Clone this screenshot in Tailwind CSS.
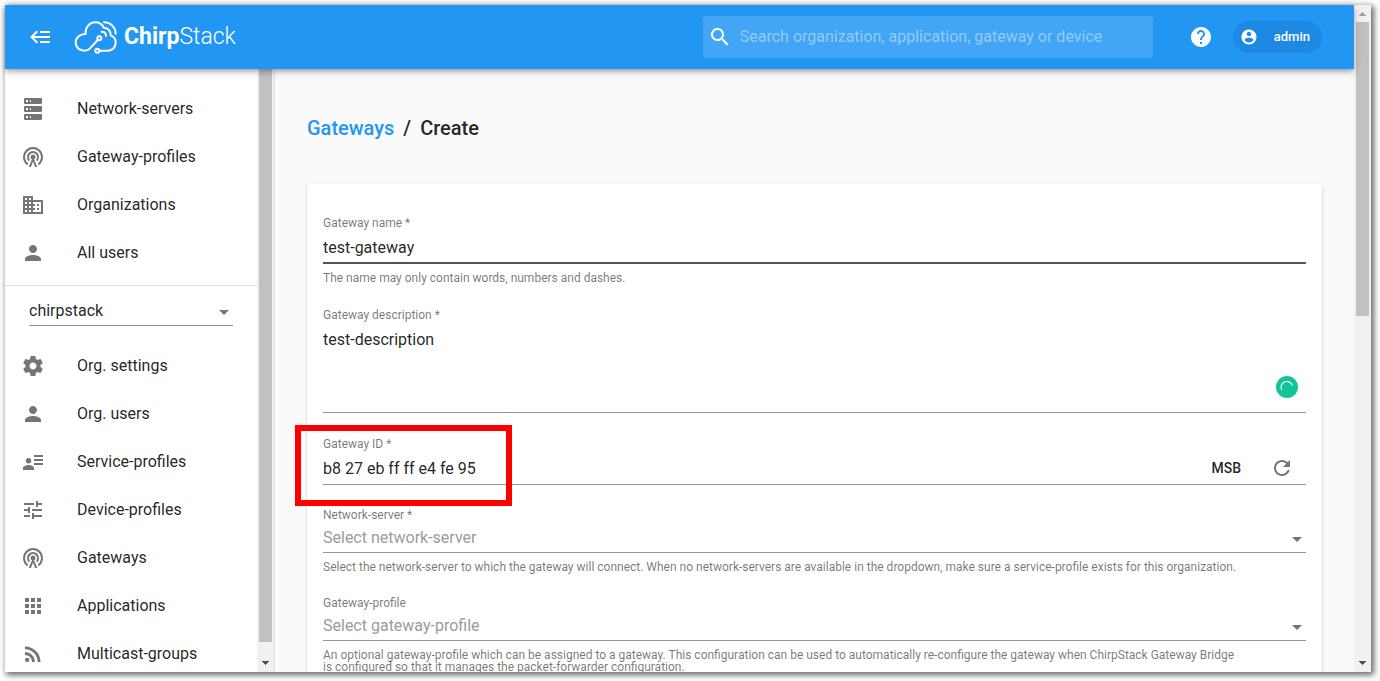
<!DOCTYPE html>
<html lang="en">
<head>
<meta charset="utf-8">
<meta name="viewport" content="width=device-width, initial-scale=1">
<title>ChirpStack - Create gateway</title>
<script src="https://cdn.jsdelivr.net/npm/@tailwindcss/browser@4"></script>
</head>
<body class="h-screen overflow-hidden bg-white pt-[5px] pl-[5px] pr-[9px] pb-[9px] font-['Roboto',sans-serif] text-base text-black/87">
<div class="flex h-full bg-[#fafafa] shadow-[2px_2px_6px_1px_rgba(0,0,0,0.6)]">
  <div class="flex min-w-0 flex-1 flex-col">
    <header class="relative z-10 flex h-16 shrink-0 items-center bg-[#2196f3] pl-6 pr-8 text-white shadow-[0_2px_4px_-1px_rgba(0,0,0,0.2),0_4px_5px_rgba(0,0,0,0.14),0_1px_10px_rgba(0,0,0,0.12)]">
      <button type="button" aria-label="Toggle menu" class="size-6 shrink-0">
        <svg viewBox="0 0 24 24" class="size-6 fill-current"><path d="M5,13L9,17L7.6,18.42L1.18,12L7.6,5.58L9,7L5,11H21V13H5M21,6V8H11V6H21M21,16V18H11V16H21Z"/></svg>
      </button>
      <a href="#" class="ml-5 flex items-center gap-[6px] text-[23px] leading-8">
        <svg viewBox="220 50 135 105" class="h-[35px] w-[45px]" fill="none" stroke="currentColor" stroke-width="6" stroke-linecap="round" stroke-linejoin="round" aria-hidden="true">
          <path d="M294 110 L271 135 Q265 142 254 142 C238 142 228 131 228 118 C228 103 240 92 258 92 C256 71 270 57 286 57 C298 57 308 63 312 73 C325 74 333 83 333 96 C343 99 348 107 348 118 C348 131 339 142 325 142 L300 142"/>
          <circle cx="299" cy="105" r="6"/>
          <circle cx="293" cy="142" r="6"/>
          <path d="M313 57 C333 57 348 72 348 91"/>
          <path d="M306 85 C314 85 319 90 319 98"/>
        </svg>
        <span><span class="font-bold">Chirp</span><span class="font-light">Stack</span></span>
      </a>
      <label class="ml-auto flex h-[42px] w-[450px] items-center gap-2 rounded-[3px] bg-[#42a5f5] pl-[5px] pr-2">
        <svg viewBox="0 0 24 24" class="size-6 shrink-0 fill-current" aria-hidden="true"><path d="M15.5 14h-.79l-.28-.27C15.41 12.59 16 11.11 16 9.5 16 5.91 13.09 3 9.5 3S3 5.91 3 9.5 5.91 16 9.5 16c1.61 0 3.09-.59 4.23-1.57l.27.28v.79l5 4.99L20.49 19l-4.99-5zm-6 0C7.01 14 5 11.99 5 9.5S7.01 5 9.5 5 14 7.01 14 9.5 11.99 14 9.5 14z"/></svg>
        <input type="search" aria-label="Search" placeholder="Search organization, application, gateway or device" class="min-w-0 flex-1 bg-transparent text-base outline-none placeholder:text-[#93cbf9]">
      </label>
      <a href="#" aria-label="Help" class="ml-9">
        <svg viewBox="0 0 24 24" class="size-6 fill-current"><path d="M12 2C6.48 2 2 6.48 2 12s4.48 10 10 10 10-4.48 10-10S17.52 2 12 2zm1 17h-2v-2h2v2zm2.07-7.75l-.9.92C13.45 12.9 13 13.5 13 15h-2v-.5c0-1.1.45-2.1 1.17-2.83l1.24-1.26c.37-.36.59-.86.59-1.41 0-1.1-.9-2-2-2s-2 .9-2 2H8c0-2.21 1.79-4 4-4s4 1.79 4 4c0 .88-.36 1.68-.93 2.25z"/></svg>
      </a>
      <button type="button" class="ml-5 flex h-8 items-center gap-4 rounded-full bg-[#1e88e5] pl-[7px] pr-3 text-[13px] font-medium">
        <svg viewBox="0 0 24 24" class="size-[18px] fill-current" aria-hidden="true"><path d="M12 2C6.48 2 2 6.48 2 12s4.48 10 10 10 10-4.48 10-10S17.52 2 12 2zm0 3c1.66 0 3 1.34 3 3s-1.34 3-3 3-3-1.340-3-3 1.34-3 3-3zm0 14.200c-2.500 0-4.710-1.280-6-3.220.03-1.990 4-3.080 6-3.080 1.990 0 5.970 1.090 6 3.080-1.290 1.940-3.500 3.220-6 3.220z"/></svg>
        admin
      </button>
    </header>

    <div class="flex min-h-0 flex-1">
      <aside class="flex w-[270px] shrink-0 overflow-hidden border-r border-black/12 bg-white">
        <nav class="min-w-0 flex-1 pt-4" aria-label="Main">
          <ul class="border-b border-black/12 pb-2">
            <li><a href="#" class="flex h-12 items-center gap-8 pl-4"><svg viewBox="0 0 24 24" class="size-6 fill-[#757575]"><path d="M4,1H20A1,1 0 0,1 21,2V6A1,1 0 0,1 20,7H4A1,1 0 0,1 3,6V2A1,1 0 0,1 4,1M4,9H20A1,1 0 0,1 21,10V14A1,1 0 0,1 20,15H4A1,1 0 0,1 3,14V10A1,1 0 0,1 4,9M4,17H20A1,1 0 0,1 21,18V22A1,1 0 0,1 20,23H4A1,1 0 0,1 3,22V18A1,1 0 0,1 4,17M9,5H10V3H9V5M9,13H10V11H9V13M9,21H10V19H9V21M5,3V5H7V3H5M5,11V13H7V11H5M5,19V21H7V19H5Z"/></svg>Network-servers</a></li>
            <li><a href="#" class="flex h-12 items-center gap-8 pl-4"><svg viewBox="0 0 24 24" class="size-6 fill-[#757575]"><path d="M11 14.300A2.500 2.500 0 1 1 13 14.300L16.300 22H14.100L12 16.500L9.900 22H7.700Z"/><path d="M6.300 20.200A10 10 0 1 1 17.700 20.200L16.900 18.400A8 8 0 1 0 7.100 18.400ZM8 16.500A6 6 0 1 1 16 16.500L15.200 14.500A4 4 0 1 0 8.800 14.500Z"/></svg>Gateway-profiles</a></li>
            <li><a href="#" class="flex h-12 items-center gap-8 pl-4"><svg viewBox="0 0 24 24" class="size-6 fill-[#757575]"><path d="M12 7V3H2v18h20V7H12zM6 19H4v-2h2v2zm0-4H4v-2h2v2zm0-4H4V9h2v2zm0-4H4V5h2v2zm4 12H8v-2h2v2zm0-4H8v-2h2v2zm0-4H8V9h2v2zm0-4H8V5h2v2zm10 12h-8v-2h2v-2h-2v-2h2v-2h-2V9h8v10zm-2-8h-2v2h2v-2zm0 4h-2v2h2v-2z"/></svg>Organizations</a></li>
            <li><a href="#" class="flex h-12 items-center gap-8 pl-4"><svg viewBox="0 0 24 24" class="size-6 fill-[#757575]"><path d="M12 12c2.210 0 4-1.790 4-4s-1.790-4-4-4-4 1.790-4 4 1.790 4 4 4zm0 2c-2.670 0-8 1.340-8 4v2h16v-2c0-2.660-5.330-4-8-4z"/></svg>All users</a></li>
          </ul>
          <div class="relative mx-6 mt-2 mb-4">
            <select aria-label="Organization" class="block h-8 w-full appearance-none border-b border-black/42 bg-transparent pt-0.5 pr-6 text-base outline-none"><option>chirpstack</option></select>
            <svg viewBox="0 0 24 24" class="pointer-events-none absolute right-[-3px] top-[6px] size-6 fill-[#757575]" aria-hidden="true"><path d="M7 10l5 5 5-5z"/></svg>
          </div>
          <ul>
            <li><a href="#" class="flex h-12 items-center gap-8 pl-4"><svg viewBox="0 0 24 24" class="size-6 fill-[#757575]"><path d="M19.430 12.980c.04-.32.070-.64.070-.98s-.03-.66-.07-.98l2.110-1.650c.19-.15.24-.42.12-.64l-2-3.460c-.12-.22-.39-.3-.61-.22l-2.490 1c-.52-.4-1.080-.73-1.690-.98l-.38-2.650C14.460 2.180 14.250 2 14 2h-4c-.25 0-.46.18-.49.42l-.38 2.650c-.61.25-1.170.59-1.690.98l-2.490-1c-.23-.09-.49 0-.61.22l-2 3.460c-.13.22-.07.49.12.64l2.110 1.650c-.04.32-.07.65-.07.98s.03.66.07.98l-2.110 1.650c-.19.15-.24.42-.12.64l2 3.460c.12.22.39.3.61.22l2.490-1c.52.4 1.080.73 1.690.98l.38 2.650c.03.24.24.42.49.42h4c.25 0 .46-.18.49-.42l.38-2.650c.61-.25 1.170-.59 1.690-.98l2.490 1c.23.09.49 0 .61-.22l2-3.460c.12-.22.070-.49-.12-.64l-2.110-1.650zM12 15.500c-1.930 0-3.500-1.570-3.500-3.500s1.570-3.500 3.500-3.500 3.500 1.570 3.500 3.500-1.570 3.500-3.500 3.500z"/></svg>Org. settings</a></li>
            <li><a href="#" class="flex h-12 items-center gap-8 pl-4"><svg viewBox="0 0 24 24" class="size-6 fill-[#757575]"><path d="M12 12c2.210 0 4-1.790 4-4s-1.790-4-4-4-4 1.790-4 4 1.790 4 4 4zm0 2c-2.670 0-8 1.340-8 4v2h16v-2c0-2.660-5.330-4-8-4z"/></svg>Org. users</a></li>
            <li><a href="#" class="flex h-12 items-center gap-8 pl-4"><svg viewBox="0 0 24 24" class="size-6 fill-[#757575]"><path d="M13 5h9v2h-9zM13 9h9v2h-9zM13 13h9v2h-9zM7.500 8a2.700 2.700 0 1 1 0 5.400a2.700 2.700 0 1 1 0-5.400zM2 18c0-2 3.670-3 5.500-3s5.500 1 5.500 3v2H2z"/></svg>Service-profiles</a></li>
            <li><a href="#" class="flex h-12 items-center gap-8 pl-4"><svg viewBox="0 0 24 24" class="size-6 fill-[#757575]"><path d="M3 17v2h6v-2H3zM3 5v2h10V5H3zm10 16v-2h8v-2h-8v-2h-2v6h2zM7 9v2H3v2h4v2h2V9H7zm14 4v-2H11v2h10zm-6-4h2V7h4V5h-4V3h-2v6z"/></svg>Device-profiles</a></li>
            <li><a href="#" class="flex h-12 items-center gap-8 pl-4"><svg viewBox="0 0 24 24" class="size-6 fill-[#757575]"><path d="M11 14.300A2.500 2.500 0 1 1 13 14.300L16.300 22H14.100L12 16.500L9.900 22H7.700Z"/><path d="M6.300 20.200A10 10 0 1 1 17.700 20.200L16.900 18.400A8 8 0 1 0 7.100 18.400ZM8 16.500A6 6 0 1 1 16 16.500L15.200 14.500A4 4 0 1 0 8.800 14.500Z"/></svg>Gateways</a></li>
            <li><a href="#" class="flex h-12 items-center gap-8 pl-4"><svg viewBox="0 0 24 24" class="size-6 fill-[#757575]"><path d="M4 8h4V4H4v4zm6 12h4v-4h-4v4zm-6 0h4v-4H4v4zm0-6h4v-4H4v4zm6 0h4v-4h-4v4zm6-10v4h4V4h-4zm-6 4h4V4h-4v4zm6 6h4v-4h-4v4zm0 6h4v-4h-4v4z"/></svg>Applications</a></li>
            <li><a href="#" class="flex h-12 items-center gap-8 pl-4"><svg viewBox="0 0 24 24" class="size-6 fill-[#757575]"><circle cx="6.180" cy="17.820" r="2.180"/><path d="M4 4.440v2.830c7.030 0 12.730 5.700 12.730 12.730h2.830c0-8.590-6.970-15.560-15.560-15.560zm0 5.660v2.830c3.900 0 7.070 3.170 7.070 7.070h2.830c0-5.470-4.430-9.900-9.900-9.900z"/></svg>Multicast-groups</a></li>
          </ul>
        </nav>
        <div class="flex w-[17px] flex-col items-center bg-[#f1f1f1]" aria-hidden="true">
          <div class="w-[13px] flex-1 bg-[#c1c1c1]"></div>
          <svg viewBox="0 0 17 30" class="h-[30px] w-[17px] fill-[#505050]" shape-rendering="crispEdges"><path d="M5 19h7v1h-1v1h-1v1H9v1H8v-1H7v-1H6v-1H5z"/></svg>
        </div>
      </aside>

      <main class="min-w-0 flex-1 overflow-hidden px-8 pt-[45px]">
        <h1 class="flex gap-[9px] text-xl leading-7 font-medium"><a href="#" class="text-[#2196f3]">Gateways</a><span>/</span><span>Create</span></h1>
        <form class="mt-[42px] rounded bg-white px-4 pt-[31px] pb-6 shadow-[0_1px_3px_rgba(0,0,0,0.2),0_1px_1px_rgba(0,0,0,0.14)]">
          <div class="mb-[23px]">
            <label for="name" class="block text-xs leading-4 text-black/54">Gateway name *</label>
            <input id="name" type="text" value="test-gateway" class="block h-[33px] w-full border-b-2 border-[#555] pt-0.5 outline-none">
            <p class="mt-2 text-xs leading-3 text-black/54">The name may only contain words, numbers and dashes.</p>
          </div>
          <div class="relative mb-[23px]">
            <label for="description" class="block text-xs leading-4 text-black/54">Gateway description *</label>
            <textarea id="description" class="block h-[90px] w-full resize-none border-b border-black/42 pt-[5px] leading-6 outline-none">test-description</textarea>
            <svg viewBox="0 0 22 22" class="absolute right-2 bottom-[15px] size-[22px]" fill="none" aria-hidden="true"><circle cx="11" cy="11" r="11" fill="#15c39a"/><path d="M5.500 13.500A5.700 5.700 0 0 1 16.300 9" stroke="#d8f5ee" stroke-width="1.300" stroke-linecap="round"/></svg>
          </div>
          <div class="relative mb-[22px]">
            <label for="gateway-id" class="block text-xs leading-4 text-black/54">Gateway ID *</label>
            <div class="flex h-[33px] items-center border-b border-black/42">
              <input id="gateway-id" type="text" value="b8 27 eb ff ff e4 fe 95" class="min-w-0 flex-1 pt-0.5 outline-none">
              <button type="button" class="mr-[29px] text-sm font-medium">MSB</button>
              <button type="button" aria-label="Generate random ID" class="mr-3 size-6"><svg viewBox="0 0 24 24" class="size-6 fill-[#757575]"><path d="M17.650 6.350C16.200 4.900 14.210 4 12 4c-4.420 0-7.990 3.580-7.990 8s3.570 8 7.990 8c3.730 0 6.840-2.550 7.730-6h-2.080c-.82 2.330-3.040 4-5.650 4-3.310 0-6-2.690-6-6s2.690-6 6-6c1.660 0 3.140.69 4.220 1.780L13 11h7V4l-2.350 2.350z"/></svg></button>
            </div>
            <div class="pointer-events-none absolute -top-[11px] -left-7 h-[81px] w-[217px] border-6 border-[#ff0000]" aria-hidden="true"></div>
          </div>
          <div class="mb-[22px]">
            <label for="network-server" class="block text-xs leading-4 text-black/54">Network-server *</label>
            <div class="relative">
              <select id="network-server" class="block h-[30px] w-full appearance-none border-b border-black/42 bg-transparent text-[#9b9b9b] outline-none"><option>Select network-server</option></select>
              <svg viewBox="0 0 24 24" class="pointer-events-none absolute right-[-3px] top-1 size-6 fill-[#757575]" aria-hidden="true"><path d="M7 10l5 5 5-5z"/></svg>
            </div>
            <p class="mt-2 text-xs leading-3 text-black/54">Select the network-server to which the gateway will connect. When no network-servers are available in the dropdown, make sure a service-profile exists for this organization.</p>
          </div>
          <div>
            <label for="gateway-profile" class="block text-xs leading-4 text-black/54">Gateway-profile</label>
            <div class="relative">
              <select id="gateway-profile" class="block h-[30px] w-full appearance-none border-b border-black/42 bg-transparent text-[#9b9b9b] outline-none"><option>Select gateway-profile</option></select>
              <svg viewBox="0 0 24 24" class="pointer-events-none absolute right-[-3px] top-1 size-6 fill-[#757575]" aria-hidden="true"><path d="M7 10l5 5 5-5z"/></svg>
            </div>
            <p class="mt-2 text-xs leading-3 text-black/54">An optional gateway-profile which can be assigned to a gateway. This configuration can be used to automatically re-configure the gateway when ChirpStack Gateway Bridge<br>is configured so that it manages the packet-forwarder configuration.</p>
          </div>
        </form>
      </main>
    </div>
  </div>
  <div class="flex w-[17px] shrink-0 flex-col items-center bg-[#f1f1f1]" aria-hidden="true">
    <svg viewBox="0 0 17 17" class="size-[17px] fill-[#a3a3a3]" shape-rendering="crispEdges"><path d="M8 7h1v1h1v1h1v1h1v1H5v-1h1V9h1V8h1z"/></svg>
    <div class="h-[294px] w-[13px] bg-[#c1c1c1]"></div>
    <svg viewBox="0 0 17 17" class="mt-auto size-[17px] fill-[#505050]" shape-rendering="crispEdges"><path d="M5 6h7v1h-1v1h-1v1H9v1H8V9H7V8H6V7H5z"/></svg>
  </div>
</div>
</body>
</html>
